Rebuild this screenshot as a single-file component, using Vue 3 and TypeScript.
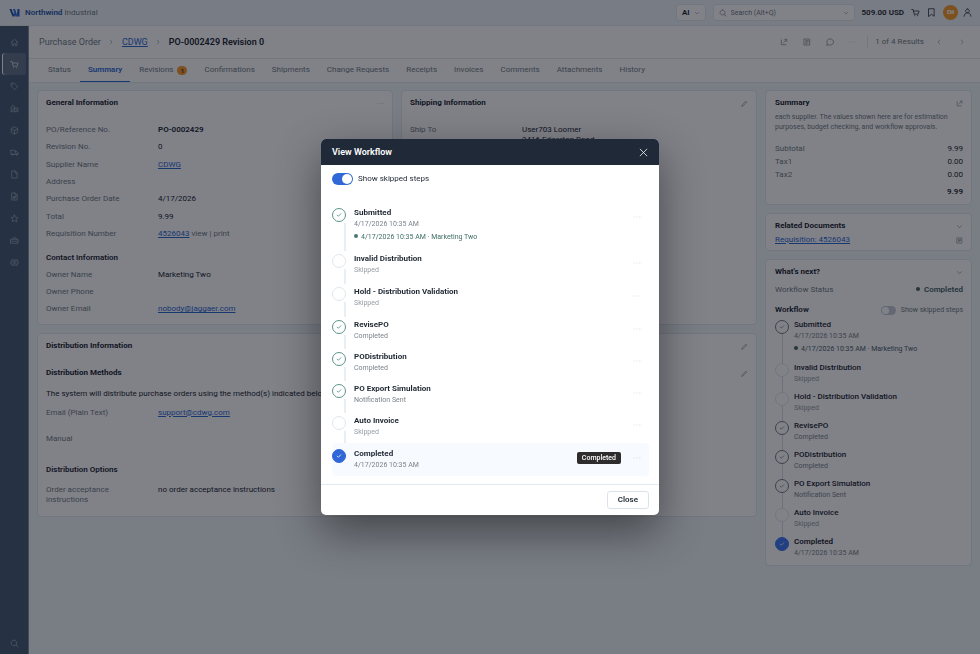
<script setup lang="ts">
import { h, ref } from 'vue'

interface Step {
  name: string
  note: string
  state: 'done' | 'skipped' | 'current'
  event?: string
}

const glyphs: Record<string, string> = {
  home: 'M3 11.5 12 3.5l9 8M5.5 9.5V20.5h4.5v-6h4v6h4.5V9.5',
  cart: 'M2 4h3.5l3 12.5h10.5L21.5 8H6.5M9.5 20.5h.5M17.500 20.500h.5',
  tag: 'M3 4v7l9.500 9.500 8-8L11 3H4zM7 7.500h.5',
  building: 'M3 20.500V8l4.500-5L12 7v13.500M3 20.500h5V11M12 11h9v9.500h-9M16.500 14v.5M16.500 17v.5',
  box: 'M12 2.500 20.500 7v10L12 21.500 3.500 17V7zM3.500 7 12 12l8.500-5M12 12v9.500',
  truck: 'M2 6h12v11H9M5 17H2V6M14 9.500h4.500L22 13.500V17h-2M14 17h2M7 15.500a2 2 0 1 0 .1 0M18 15.500a2 2 0 1 0 .1 0',
  file: 'M5.500 2.500h8.500l5 5v14H5.500zM13.500 3v5H19',
  report: 'M5.500 2.500h8.500l5 5v14H5.500zM13.500 3v5H19M8.500 12h7M8.500 15h7M8.500 18h4',
  star: 'm12 2.500 2.900 6.200 6.700.8-5 4.600 1.400 6.700L12 17.400l-6 3.400 1.400-6.700-5-4.600 6.700-.8z',
  briefcase: 'M2.500 8.500h19v11h-19zM8 8.500V5h8v3.500M2.500 14h19',
  gear: 'M5 5h14v3h2.500v8H19v3H5v-3H2.500V8H5zM12 8a4 4 0 1 0 .1 0M12 11v2',
  search: 'M10.500 3a7.500 7.500 0 1 0 .1 0M16 16l5.500 5.500',
  down: 'm5 9 7 7 7-7',
  right: 'm9 4 7 8-7 8',
  left: 'm15 4-7 8 7 8',
  bookmark: 'M5 2h14v20l-7-5-7 5z',
  user: 'M12 2.500a5 5 0 1 0 .1 0M3 22c.5-6 4-9 9-9s8.500 3 9 9',
  open: 'M4 6v14h14M14 4h6.500v6.500M20 4.500l-9 9',
  doc: 'M4 3h16v18H4zM8 8h8M8 12h8M8 16h4',
  chat: 'M2.500 21.500 4 17a10 9.500 0 1 1 4 3.500z',
  dots: 'M3 12h1M11.500 12h1M20 12h1',
  pencil: 'M3 21l1-4L17 4l3 3L7 20z',
  check: 'm5 12.500 4.500 4.500L19 7',
  close: 'M3 3l18 18M21 3 3 21',
}

const Icon = (props: { name: string }) =>
  h(
    'svg',
    { class: 'icon', viewBox: '0 0 24 24', 'aria-hidden': 'true' },
    [h('path', { d: glyphs[props.name] })],
  )
Icon.props = ['name']

const nav = ['home', 'cart', 'tag', 'building', 'box', 'truck', 'file', 'report', 'star', 'briefcase', 'gear']
const tabs = ['Status', 'Summary', 'Revisions', 'Confirmations', 'Shipments', 'Change Requests', 'Receipts', 'Invoices', 'Comments', 'Attachments', 'History']

const steps: Step[] = [
  { name: 'Submitted', note: '4/17/2026 10:35 AM', state: 'done', event: '4/17/2026 10:35 AM · Marketing Two' },
  { name: 'Invalid Distribution', note: 'Skipped', state: 'skipped' },
  { name: 'Hold - Distribution Validation', note: 'Skipped', state: 'skipped' },
  { name: 'RevisePO', note: 'Completed', state: 'done' },
  { name: 'PODistribution', note: 'Completed', state: 'done' },
  { name: 'PO Export Simulation', note: 'Notification Sent', state: 'done' },
  { name: 'Auto Invoice', note: 'Skipped', state: 'skipped' },
  { name: 'Completed', note: '4/17/2026 10:35 AM', state: 'current' },
]

const open = ref(true)
const showSkipped = ref(true)
const sideSkipped = ref(false)
</script>

<template>
  <div class="app">
    <header class="topbar">
      <a class="brand" href="#">
        <svg class="logo" viewBox="0 0 22 20" aria-hidden="true">
          <path class="logo-a" d="M1 2h4l4 11-2 4z" />
          <path class="logo-b" d="M8 2h4l5 15h-4z" />
          <path class="logo-c" d="M7 17 10 9l2 4-1 4zM17 2h4v15h-4l-1-5z" />
        </svg>
        <b>Northwind</b><span>Industrial</span>
      </a>
      <button class="ai" type="button">AI <Icon name="down" /></button>
      <label class="search">
        <Icon name="search" />
        <input type="text" placeholder="Search (Alt+Q)" aria-label="Search" />
        <Icon name="down" />
      </label>
      <b class="amount">509.00 USD</b>
      <button class="plain" type="button" aria-label="Cart"><Icon name="cart" /></button>
      <button class="plain" type="button" aria-label="Bookmarks"><Icon name="bookmark" /></button>
      <span class="avatar">EM</span>
      <button class="plain" type="button" aria-label="Profile"><Icon name="user" /></button>
    </header>

    <div class="body">
      <nav class="rail">
        <a v-for="item in nav" :key="item" href="#" :class="{ active: item === 'cart' }" :aria-label="item">
          <Icon :name="item" />
        </a>
        <a class="last" href="#" aria-label="search"><Icon name="search" /></a>
      </nav>

      <div class="page">
        <div class="crumbs">
          <span>Purchase Order</span>
          <Icon name="right" />
          <a href="#">CDWG</a>
          <Icon name="right" />
          <h1>PO-0002429 Revision 0</h1>
          <div class="actions">
            <button class="plain" type="button" aria-label="Open"><Icon name="open" /></button>
            <button class="plain" type="button" aria-label="Document"><Icon name="doc" /></button>
            <button class="plain" type="button" aria-label="Comment"><Icon name="chat" /></button>
            <button class="plain faint" type="button" aria-label="More"><Icon name="dots" /></button>
          </div>
          <div class="pager">
            <span>1 of 4 Results</span>
            <button class="plain" type="button" aria-label="Previous"><Icon name="left" /></button>
            <button class="plain" type="button" aria-label="Next"><Icon name="right" /></button>
          </div>
        </div>

        <nav class="tabs">
          <a v-for="tab in tabs" :key="tab" href="#" :class="{ active: tab === 'Summary' }">
            {{ tab }}<span v-if="tab === 'Revisions'" class="count">1</span>
          </a>
        </nav>

        <div class="content">
          <main class="main">
            <section class="card general">
              <div class="card-head"><h2>General Information</h2><Icon class="faint" name="dots" /></div>
              <dl class="fields seven">
                <div><dt>PO/Reference No.</dt><dd><b>PO-0002429</b></dd></div>
                <div><dt>Revision No.</dt><dd>0</dd></div>
                <div><dt>Supplier Name</dt><dd><a href="#">CDWG</a></dd></div>
                <div><dt>Address</dt><dd></dd></div>
                <div><dt>Purchase Order Date</dt><dd>4/17/2026</dd></div>
                <div><dt>Total</dt><dd>9.99</dd></div>
                <div><dt>Requisition Number</dt><dd><a href="#">4526043</a> <span class="muted">view | print</span></dd></div>
              </dl>
              <h3>Contact Information</h3>
              <dl class="fields three">
                <div><dt>Owner Name</dt><dd>Marketing Two</dd></div>
                <div><dt>Owner Phone</dt><dd></dd></div>
                <div><dt>Owner Email</dt><dd><a href="#">nobody@jaggaer.com</a></dd></div>
              </dl>
            </section>

            <section class="card shipping">
              <div class="card-head"><h2>Shipping Information</h2><Icon name="pencil" /></div>
              <dl class="fields">
                <div class="top"><dt>Ship To</dt><dd>User703 Loomer<br />3416 Edgerton Road</dd></div>
              </dl>
            </section>

            <section class="card distribution">
              <div class="card-head"><h2>Distribution Information</h2><Icon name="pencil" /></div>
              <div class="card-head sub"><h2>Distribution Methods</h2><Icon name="pencil" /></div>
              <p>The system will distribute purchase orders using the method(s) indicated below:</p>
              <dl class="fields methods">
                <div><dt>Email (Plain Text)</dt><dd><a href="#">support@cdwg.com</a></dd></div>
                <div><dt>Manual</dt><dd></dd></div>
              </dl>
              <h3>Distribution Options</h3>
              <dl class="fields options">
                <div class="top"><dt>Order acceptance instructions</dt><dd>no order acceptance instructions</dd></div>
              </dl>
            </section>
          </main>

          <aside class="side">
            <section class="card summary">
              <div class="card-head"><h2>Summary</h2><Icon name="open" /></div>
              <p class="hint">each supplier. The values shown here are for estimation purposes, budget checking, and workflow approvals.</p>
              <dl class="totals">
                <div><dt>Subtotal</dt><dd>9.99</dd></div>
                <div><dt>Tax1</dt><dd>0.00</dd></div>
                <div><dt>Tax2</dt><dd>0.00</dd></div>
              </dl>
              <b class="grand">9.99</b>
            </section>

            <section class="card related">
              <div class="card-head"><h2>Related Documents</h2><Icon name="down" /></div>
              <div class="card-head"><a href="#">Requisition: 4526043</a><Icon name="doc" /></div>
            </section>

            <section class="card next">
              <div class="card-head"><h2>What's next?</h2><Icon name="down" /></div>
              <div class="status"><span class="muted">Workflow Status</span><b><i class="dot"></i>Completed</b></div>
              <div class="status flow">
                <h3>Workflow</h3>
                <label class="toggle small"><input v-model="sideSkipped" type="checkbox" role="switch" /><span>Show skipped steps</span></label>
              </div>
              <ol class="steps">
                <li v-for="step in steps" :key="step.name" :class="step.state">
                  <span class="mark"><Icon v-if="step.state !== 'skipped'" name="check" /></span>
                  <div class="info">
                    <span class="name">{{ step.name }}</span>
                    <span class="note">{{ step.note }}</span>
                    <span v-if="step.event" class="event"><i class="dot"></i>{{ step.event }}</span>
                  </div>
                </li>
              </ol>
            </section>
          </aside>
        </div>
      </div>
    </div>

    <div v-if="open" class="overlay">
      <div class="modal" role="dialog" aria-modal="true" aria-labelledby="workflow-title">
        <div class="modal-head">
          <h2 id="workflow-title">View Workflow</h2>
          <button class="plain" type="button" aria-label="Dismiss" @click="open = false"><Icon name="close" /></button>
        </div>
        <div class="modal-body">
          <label class="toggle"><input v-model="showSkipped" type="checkbox" role="switch" /><span>Show skipped steps</span></label>
          <ol class="steps">
            <li v-for="step in steps" v-show="showSkipped || step.state !== 'skipped'" :key="step.name" :class="step.state">
              <span class="mark"><Icon v-if="step.state !== 'skipped'" name="check" /></span>
              <div class="info">
                <span class="name">{{ step.name }}</span>
                <span class="note">{{ step.note }}</span>
                <span v-if="step.event" class="event"><i class="dot"></i>{{ step.event }}</span>
              </div>
              <span v-if="step.state === 'current'" class="badge">Completed</span>
              <button class="plain more" type="button" aria-label="Step actions"><Icon name="dots" /></button>
            </li>
          </ol>
        </div>
        <div class="modal-foot">
          <button class="close" type="button" @click="open = false">Close</button>
        </div>
      </div>
    </div>
  </div>
</template>

<style>
body {
  margin: 0;
  overflow: hidden;
}
</style>

<style scoped>
.app {
  --ink: #1f2733;
  --muted: #757c84;
  --line: #e0e6ec;
  --blue: #2f6ad2;
  display: flex;
  flex-direction: column;
  min-height: 100vh;
  background: #f1f4f7;
  color: var(--ink);
  font: 8px/10px Roboto, "Liberation Sans", sans-serif;
}
* {
  box-sizing: border-box;
}
h1, h2, h3, p, dl, dd, ol {
  margin: 0;
  padding: 0;
}
h1, h2, h3, b {
  font-weight: 600;
}
h2, h3 {
  font-size: 8px;
  line-height: 10px;
}
button, input {
  font: inherit;
  color: inherit;
}
a {
  color: var(--blue);
}
.icon {
  width: 8px;
  height: 8px;
  flex: none;
  fill: none;
  stroke: currentColor;
  stroke-width: 2;
  stroke-linecap: round;
  stroke-linejoin: round;
}
.plain {
  display: flex;
  padding: 0;
  border: 0;
  background: none;
}
.muted, dt {
  color: var(--muted);
}
.faint {
  opacity: 0.5;
}

.topbar {
  display: flex;
  align-items: center;
  height: 26px;
  padding: 0 8px 0 9px;
  background: #eff2f6;
  border-bottom: 1px solid var(--line);
}
.brand {
  display: flex;
  align-items: center;
  margin-right: auto;
  color: var(--muted);
  text-decoration: none;
}
.brand b {
  margin-right: 2px;
  color: #1f55ab;
}
.logo {
  width: 11px;
  height: 10px;
  margin-right: 5px;
}
.logo-a { fill: #1d4f9e; }
.logo-b { fill: #2f6fe0; }
.logo-c { fill: #2a5fc0; }
.ai {
  display: flex;
  align-items: center;
  gap: 4px;
  height: 17px;
  margin-right: 7px;
  padding: 0 5px;
  border: 1px solid var(--line);
  border-radius: 3px;
  background: #fff;
  font-weight: 600;
}
.ai .icon, .search .icon:last-child {
  width: 6px;
  height: 6px;
  color: var(--muted);
}
.search {
  display: flex;
  align-items: center;
  gap: 4px;
  width: 142px;
  height: 17px;
  margin-right: 7px;
  padding: 0 5px;
  border: 1px solid var(--line);
  border-radius: 3px;
  background: #fff;
  color: var(--muted);
}
.search input {
  flex: 1;
  min-width: 0;
  padding: 0;
  border: 0;
  outline: 0;
  background: none;
  font-size: 7px;
}
.search input::placeholder {
  color: var(--muted);
}
.amount {
  margin-right: 7px;
}
.topbar .plain {
  margin-right: 7px;
}
.topbar .plain .icon {
  width: 9px;
  height: 9px;
}
.topbar .plain:last-child {
  margin-right: 0;
}
.avatar {
  width: 15px;
  height: 15px;
  margin-right: 5px;
  border-radius: 50%;
  background: #f99a2c;
  color: #fff;
  font-size: 5px;
  font-weight: 700;
  line-height: 15px;
  text-align: center;
}

.body {
  display: flex;
  flex: 1;
}
.rail {
  display: flex;
  flex-direction: column;
  width: 29px;
  padding: 5px 2px 0;
  border-right: 1px solid #8793a5;
  background: #4a5e76;
}
.rail a {
  display: flex;
  align-items: center;
  justify-content: center;
  height: 22px;
  border-radius: 3px;
  color: #9ca8b5;
}
.rail a.active {
  border-left: 1px solid #fff;
  background: #66758a;
  color: #dde2e9;
}
.rail .icon {
  width: 9px;
  height: 9px;
}
.rail .last {
  margin-top: auto;
}
.page {
  flex: 1;
  min-width: 0;
}
.crumbs {
  display: flex;
  align-items: center;
  height: 33px;
  padding: 0 15px 0 10px;
  border-bottom: 1px solid var(--line);
  background: #fff;
  color: var(--muted);
  font-size: 9px;
}
.crumbs > .icon {
  width: 6px;
  height: 6px;
  margin: 0 8px 0 7px;
}
.crumbs h1 {
  color: var(--ink);
  font-size: 9px;
}
.actions {
  display: flex;
  gap: 15px;
  margin-left: auto;
}
.pager {
  display: flex;
  align-items: center;
  gap: 12px;
  margin-left: 10px;
  padding: 1px 0 1px 7px;
  border-left: 1px solid var(--line);
  font-size: 8px;
}
.pager .icon {
  width: 6px;
}
.pager .plain + .plain {
  margin-left: 5px;
}
.tabs {
  display: flex;
  gap: 1px;
  height: 24px;
  padding-left: 11px;
  border-bottom: 1px solid var(--line);
  background: #fff;
}
.tabs a {
  display: flex;
  align-items: center;
  padding: 0 8px;
  border-bottom: 1px solid transparent;
  color: var(--muted);
  text-decoration: none;
}
.tabs a.active {
  border-color: var(--blue);
  color: var(--blue);
  font-weight: 600;
}
.count {
  width: 10px;
  height: 9px;
  margin-left: 4px;
  border-radius: 5px;
  background: #f99a2c;
  color: var(--ink);
  font-size: 6px;
  font-weight: 600;
  line-height: 9px;
  text-align: center;
}

.content {
  display: grid;
  grid-template-columns: 1fr 207px;
  gap: 8px;
  padding: 7px 8px;
}
.main {
  display: grid;
  grid-template-columns: 1fr 1fr;
  gap: 8px;
  align-content: start;
}
.side {
  display: flex;
  flex-direction: column;
  gap: 8px;
}
.card {
  padding: 7px 8px;
  border: 1px solid var(--line);
  border-radius: 4px;
  background: #fff;
}
.side .card {
  padding-left: 9px;
}
.card-head {
  display: flex;
  align-items: center;
  justify-content: space-between;
  color: var(--muted);
}
.card-head h2 {
  font-weight: 700;
}
.card-head h2, h3 {
  color: var(--ink);
}
.card-head .icon {
  width: 7px;
  height: 7px;
}
.fields {
  display: grid;
  grid-auto-rows: 1fr;
}
.fields div {
  display: grid;
  grid-template-columns: 112px 1fr;
  align-items: center;
}
.fields .top {
  align-items: start;
}
.fields dt {
  padding-right: 36px;
}
.general .card-head, .shipping .card-head {
  margin-bottom: 13px;
}
.shipping .fields {
  padding-top: 4px;
}
.general .fields dt {
  padding-right: 8px;
}
.seven {
  min-height: 122px;
}
.three {
  min-height: 52px;
}
.general {
  padding-bottom: 6px;
}
.general h3 {
  margin: 10px 0 3px;
}
.distribution {
  grid-column: 1 / -1;
}
.distribution .sub {
  margin: 17px 0 11px;
}
.methods {
  margin-top: 1px;
  min-height: 52px;
}
.distribution h3 {
  margin: 13px 0 10px;
}
.options {
  padding-bottom: 4px;
}

.hint {
  margin: 4px 0 12px;
  color: var(--muted);
  font-size: 7px;
}
.totals {
  display: grid;
  gap: 3px;
}
.totals div, .status {
  display: flex;
  justify-content: space-between;
}
.grand {
  display: block;
  margin-top: 7px;
  text-align: right;
}
.related {
  padding-bottom: 5px;
}
.related .card-head + .card-head {
  margin-top: 4px;
}
.status {
  align-items: center;
  margin-top: 8px;
}
.status b {
  color: #4a6469;
}
.status .dot {
  margin-right: 4px;
  background: #4a6469;
}
.flow {
  margin-top: 10px;
}
.dot {
  display: inline-block;
  width: 4px;
  height: 4px;
  margin-right: 3px;
  border-radius: 50%;
  background: #4a7a72;
  vertical-align: 1px;
}
.toggle {
  display: flex;
  align-items: center;
  gap: 5px;
}
.toggle input {
  appearance: none;
  width: 21px;
  height: 12px;
  margin: 0;
  padding: 1px;
  border-radius: 6px;
  background: #c4cbd4;
}
.toggle input::before {
  content: "";
  display: block;
  width: 10px;
  height: 10px;
  border-radius: 50%;
  background: #fff;
}
.toggle input:checked {
  background: #3068d8;
}
.toggle input:checked::before {
  margin-left: auto;
}
.small {
  color: var(--muted);
  font-size: 7px;
}
.small input {
  width: 15px;
  height: 9px;
}
.small input::before {
  width: 7px;
  height: 7px;
}

.steps {
  list-style: none;
}
.steps li {
  position: relative;
  display: flex;
  min-height: 29px;
}
.next .steps {
  margin-top: 5px;
  margin-bottom: -8px;
}
.next li:first-child {
  min-height: 43px;
}
.next li:not(:last-child)::after {
  content: "";
  position: absolute;
  top: 14px;
  bottom: 0;
  left: 7px;
  width: 1px;
  background: #d6dee6;
}
.mark {
  display: flex;
  align-items: center;
  justify-content: center;
  flex: none;
  width: 14px;
  height: 14px;
  margin-right: 5px;
  border: 1px solid #dfe6ec;
  border-radius: 50%;
  background: #fff;
  color: #3f8074;
}
.mark .icon {
  width: 6px;
  height: 6px;
  stroke-width: 3;
}
.done .mark {
  border-color: #5b9388;
}
.next .done .mark {
  border-color: #737c86;
  color: #737c86;
}
.next .done .event {
  color: #4f6168;
}
.next .done .dot {
  background: #4f6168;
}
.current .mark {
  border-color: #3068d8;
  background: #3068d8;
  color: #fff;
}
.next .current .mark {
  border-color: #4179f0;
  background: #4179f0;
}
.info {
  display: flex;
  flex: 1;
  flex-direction: column;
}
.name {
  font-weight: 500;
}
.current .name {
  font-weight: 600;
}
.note {
  margin-top: 1px;
  color: #7c838a;
  font-size: 7px;
}
.skipped .note {
  color: #969da3;
}
.event {
  margin-top: 3px;
  color: #3f6e66;
  font-size: 7px;
}

.overlay {
  position: fixed;
  inset: 0;
  display: flex;
  align-items: center;
  justify-content: center;
  background: rgba(2, 6, 18, 0.5);
}
.modal {
  width: 338px;
  max-width: 100%;
  border-radius: 5px;
  background: #fff;
  box-shadow: 0 16px 44px rgba(0, 0, 0, 0.45);
  overflow: hidden;
}
.modal-head {
  display: flex;
  align-items: center;
  justify-content: space-between;
  height: 26px;
  padding: 0 11px;
  background: #1f2937;
  color: #fff;
}
.modal-head h2 {
  font-size: 9px;
}
.modal-head .icon {
  width: 9px;
  height: 9px;
}
.modal-body {
  padding: 8px 10px 8px 11px;
}
.modal .steps {
  margin-top: 17px;
}
.modal li {
  min-height: 33px;
  padding-top: 6px;
}
.modal .done {
  min-height: 32px;
}
.modal li:first-child {
  min-height: 46px;
}
.modal li:not(:last-child)::after {
  content: "";
  position: absolute;
  top: 21px;
  bottom: -3px;
  left: 12px;
  width: 2px;
  background: #e9eef3;
}
.modal .mark {
  margin-right: 8px;
}
.modal .name {
  font-weight: 700;
}
.modal .current {
  border-radius: 4px;
  background: #f7faff;
}
.badge {
  align-self: start;
  margin-top: 3px;
  padding: 1px 5px;
  border-radius: 2px;
  background: #2f2c2e;
  color: #fff;
  font-size: 7px;
  font-weight: 500;
}
.more {
  align-self: start;
  margin: 5px 8px 0 12px;
  color: #c9d0d6;
}
.modal-foot {
  display: flex;
  justify-content: flex-end;
  padding: 6px 10px;
  border-top: 1px solid #e3e9f0;
}
.close {
  height: 18px;
  padding: 0 10px;
  border: 1px solid #dbe3ea;
  border-radius: 3px;
  background: #fff;
  font-weight: 600;
}
</style>
